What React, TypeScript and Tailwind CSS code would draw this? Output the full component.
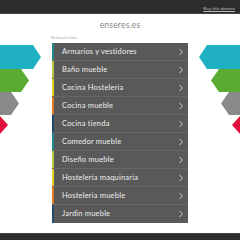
import React from 'react';

const links = [
  { label: 'Armarios y vestidores', color: 'bg-[#1d8a8a]' },
  { label: 'Baño mueble', color: 'bg-[#b7c43c]' },
  { label: 'Cocina Hosteleria', color: 'bg-[#e8d21c]' },
  { label: 'Cocina mueble', color: 'bg-[#e07a1c]' },
  { label: 'Cocina tienda', color: 'bg-[#1b4a6b]' },
  { label: 'Comedor mueble', color: 'bg-[#1d8a8a]' },
  { label: 'Diseño mueble', color: 'bg-[#b7c43c]' },
  { label: 'Hosteleria maquinaria', color: 'bg-[#e8d21c]' },
  { label: 'Hosteleria mueble', color: 'bg-[#e07a1c]' },
  { label: 'Jardin mueble', color: 'bg-[#1b4a6b]' },
];

// decorative arrows on both sides of the list
const Arrows = ({ side }: { side: 'left' | 'right' }) => (
  <svg
    width="44"
    height="92"
    viewBox="0 0 44 92"
    className={side === 'left' ? 'absolute left-0 top-[45px]' : 'absolute right-0 top-[45px] -scale-x-100'}
  >
    <polygon points="0,0 33,0 41,12 33,24 0,24" fill="#1fb1c2" />
    <polygon points="0,24 21,24 29,35.5 21,47 0,47" fill="#5aab32" />
    <polygon points="0,47 11,47 19,58.5 11,70 0,70" fill="#8a8a8a" />
    <polygon points="0,71 0,71 8,80 0,89" fill="#e1103c" />
  </svg>
);

export default function App() {
  return (
    <div className="relative w-[240px] h-[240px] bg-white overflow-hidden flex flex-col font-['Lato',sans-serif]">
      <div className="h-[14px] bg-[#2c2c2c] border-b border-[#444] flex items-end justify-end pr-[5px] pb-[2px]">
        <span className="text-[4.5px] leading-none text-[#bbb] underline">Buy this domain</span>
      </div>

      <Arrows side="left" />
      <Arrows side="right" />

      <div className="text-center text-[8.5px] leading-none text-[#888] mt-[7px] tracking-[0.2px]">enseres.es</div>

      <div className="w-[136px] mx-auto mt-[6px] flex flex-col">
        <div className="text-[4.5px] leading-none text-[#aaa] mb-[3px] -ml-[1px]">Related Links</div>
        <ul className="flex flex-col bg-[#595959]">
          {links.map((l) => (
            <li key={l.label} className="h-[18px] flex border-b border-[#666] last:border-b-0">
              <span className={`w-[2px] ${l.color}`} />
              <span className="flex-1 pl-[8px] pr-[4px] flex items-center justify-between">
                <span className="text-[7.5px] text-[#eee] leading-none tracking-[0.2px]">{l.label}</span>
                <svg width="6" height="8" viewBox="0 0 6 8">
                  <path d="M1.5 1 L4.5 4 L1.5 7" fill="none" stroke="#ddd" strokeWidth="0.9" />
                </svg>
              </span>
            </li>
          ))}
        </ul>
      </div>

      <div className="mt-auto h-[7px] bg-[#2c2c2c] border-t border-[#444]" />
    </div>
  );
}
